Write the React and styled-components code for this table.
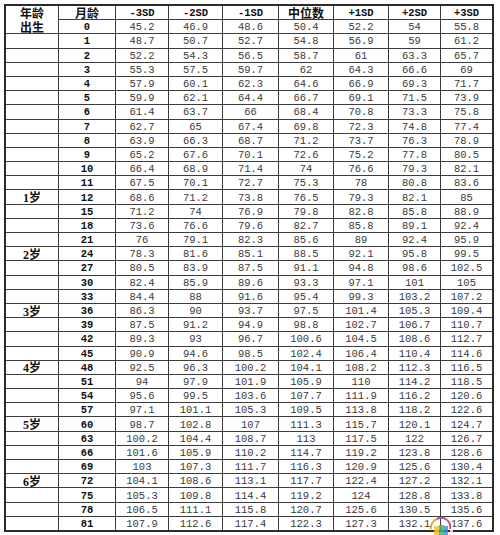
import React from 'react'
import styled, { createGlobalStyle } from 'styled-components'

const GlobalStyle = createGlobalStyle`
  html, body {
    margin: 0;
    padding: 0;
    background: #ffffff;
  }
`

const headers = ['-3SD', '-2SD', '-1SD', '中位数', '+1SD', '+2SD', '+3SD']

// [age label, month, -3SD, -2SD, -1SD, median, +1SD, +2SD, +3SD]
const rows = [
  ['出生', 0, '45.2', '46.9', '48.6', '50.4', '52.2', '54', '55.8'],
  ['', 1, '48.7', '50.7', '52.7', '54.8', '56.9', '59', '61.2'],
  ['', 2, '52.2', '54.3', '56.5', '58.7', '61', '63.3', '65.7'],
  ['', 3, '55.3', '57.5', '59.7', '62', '64.3', '66.6', '69'],
  ['', 4, '57.9', '60.1', '62.3', '64.6', '66.9', '69.3', '71.7'],
  ['', 5, '59.9', '62.1', '64.4', '66.7', '69.1', '71.5', '73.9'],
  ['', 6, '61.4', '63.7', '66', '68.4', '70.8', '73.3', '75.8'],
  ['', 7, '62.7', '65', '67.4', '69.8', '72.3', '74.8', '77.4'],
  ['', 8, '63.9', '66.3', '68.7', '71.2', '73.7', '76.3', '78.9'],
  ['', 9, '65.2', '67.6', '70.1', '72.6', '75.2', '77.8', '80.5'],
  ['', 10, '66.4', '68.9', '71.4', '74', '76.6', '79.3', '82.1'],
  ['', 11, '67.5', '70.1', '72.7', '75.3', '78', '80.8', '83.6'],
  ['1岁', 12, '68.6', '71.2', '73.8', '76.5', '79.3', '82.1', '85'],
  ['', 15, '71.2', '74', '76.9', '79.8', '82.8', '85.8', '88.9'],
  ['', 18, '73.6', '76.6', '79.6', '82.7', '85.8', '89.1', '92.4'],
  ['', 21, '76', '79.1', '82.3', '85.6', '89', '92.4', '95.9'],
  ['2岁', 24, '78.3', '81.6', '85.1', '88.5', '92.1', '95.8', '99.5'],
  ['', 27, '80.5', '83.9', '87.5', '91.1', '94.8', '98.6', '102.5'],
  ['', 30, '82.4', '85.9', '89.6', '93.3', '97.1', '101', '105'],
  ['', 33, '84.4', '88', '91.6', '95.4', '99.3', '103.2', '107.2'],
  ['3岁', 36, '86.3', '90', '93.7', '97.5', '101.4', '105.3', '109.4'],
  ['', 39, '87.5', '91.2', '94.9', '98.8', '102.7', '106.7', '110.7'],
  ['', 42, '89.3', '93', '96.7', '100.6', '104.5', '108.6', '112.7'],
  ['', 45, '90.9', '94.6', '98.5', '102.4', '106.4', '110.4', '114.6'],
  ['4岁', 48, '92.5', '96.3', '100.2', '104.1', '108.2', '112.3', '116.5'],
  ['', 51, '94', '97.9', '101.9', '105.9', '110', '114.2', '118.5'],
  ['', 54, '95.6', '99.5', '103.6', '107.7', '111.9', '116.2', '120.6'],
  ['', 57, '97.1', '101.1', '105.3', '109.5', '113.8', '118.2', '122.6'],
  ['5岁', 60, '98.7', '102.8', '107', '111.3', '115.7', '120.1', '124.7'],
  ['', 63, '100.2', '104.4', '108.7', '113', '117.5', '122', '126.7'],
  ['', 66, '101.6', '105.9', '110.2', '114.7', '119.2', '123.8', '128.6'],
  ['', 69, '103', '107.3', '111.7', '116.3', '120.9', '125.6', '130.4'],
  ['6岁', 72, '104.1', '108.6', '113.1', '117.7', '122.4', '127.2', '132.1'],
  ['', 75, '105.3', '109.8', '114.4', '119.2', '124', '128.8', '133.8'],
  ['', 78, '106.5', '111.1', '115.8', '120.7', '125.6', '130.5', '135.6'],
  ['', 81, '107.9', '112.6', '117.4', '122.3', '127.3', '132.1', '137.6'],
]

const Page = styled.div`
  padding: 4px 0 0 4px;
  position: relative;
  width: 500px;
  height: 535px;
  box-sizing: border-box;
`

const Table = styled.div`
  width: 490px;
  height: 528px;
  box-sizing: border-box;
  border: 2px solid #2a2a2a;
  background: #3c3c3c;
  display: grid;
  grid-template-columns: 52px 56px 52px 53px 55px 54px 54px 51px 51px;
  grid-template-rows: repeat(37, 1fr);
  gap: 1px;
`

const Cell = styled.div`
  background: #ffffff;
  display: flex;
  align-items: center;
  justify-content: center;
  min-height: 0;
  white-space: nowrap;
  color: ${p => (p.$bold ? '#111' : '#3a3a3a')};
  font-family: ${p =>
    p.$cjk
      ? '"Noto Sans CJK SC", "Noto Sans", sans-serif'
      : '"Liberation Mono", "DejaVu Sans Mono", monospace'};
  font-size: ${p => (p.$cjk ? '12px' : '10.5px')};
  font-weight: ${p => (p.$bold ? 700 : 400)};
  line-height: 10px;
  padding-top: 1px;
`

// first column header spans the header row and the 出生 row (no line between them)
const CornerCell = styled.div`
  grid-row: span 2;
  background: #ffffff;
  display: grid;
  grid-template-rows: 1fr 1fr;
  font-family: "Noto Sans CJK SC", "Noto Sans", sans-serif;
  font-size: 12px;
  font-weight: 700;
  color: #111;
  line-height: 10px;
`

const CornerLine = styled.span`
  display: flex;
  align-items: center;
  justify-content: center;
  min-height: 0;
`

const AgeLabel = styled.span`
  font-family: "Noto Sans CJK SC", "Noto Sans", sans-serif;
  font-size: 12px;
  font-weight: 700;
  color: #111;
  line-height: 10px;
  & b {
    font-family: "Liberation Serif", serif;
    font-size: 12px;
  }
`

const Watermark = styled.div`
  position: absolute;
  left: 420px;
  top: 507px;
  width: 46px;
  height: 28px;
  pointer-events: none;
`

function Age({ text }) {
  if (!text) return null
  const m = text.match(/^(\d)(岁)$/)
  if (!m) return <AgeLabel>{text}</AgeLabel>
  return (
    <AgeLabel>
      <b>{m[1]}</b>
      {m[2]}
    </AgeLabel>
  )
}

export default function App() {
  return (
    <>
      <GlobalStyle />
      <Page>
        <Table>
          <CornerCell>
            <CornerLine>年龄</CornerLine>
            <CornerLine>出生</CornerLine>
          </CornerCell>
          <Cell $cjk $bold>月龄</Cell>
          {headers.map(h => (
            <Cell key={h} $bold $cjk={h === '中位数'}>
              {h}
            </Cell>
          ))}
          {rows.map((r, i) => (
            <React.Fragment key={r[1]}>
              {i > 0 && (
                <Cell>
                  <Age text={r[0]} />
                </Cell>
              )}
              <Cell $bold>{r[1]}</Cell>
              {r.slice(2).map((v, j) => (
                <Cell key={j}>{v}</Cell>
              ))}
            </React.Fragment>
          ))}
        </Table>
        <Watermark>
          <svg width="46" height="28" viewBox="0 0 46 28">
            <rect x="30" y="16" width="3" height="12" fill="#ffffff" opacity="0.8" />
            <path d="M11 22 A9 9 0 0 1 17 12" stroke="#f0a030" strokeWidth="2" fill="none" />
            <path d="M17 12 A9 9 0 0 1 27 13" stroke="#9b59b6" strokeWidth="2" fill="none" />
            <path d="M27 13 A9 9 0 0 1 30 22" stroke="#e04a6a" strokeWidth="2" fill="none" />
            <rect x="14" y="19" width="5" height="9" fill="#f2c230" opacity="0.85" />
            <rect x="19" y="18" width="5" height="10" fill="#3cb878" opacity="0.85" />
            <rect x="24" y="19" width="4" height="9" fill="#3a8fd8" opacity="0.8" />
          </svg>
        </Watermark>
      </Page>
    </>
  )
}
